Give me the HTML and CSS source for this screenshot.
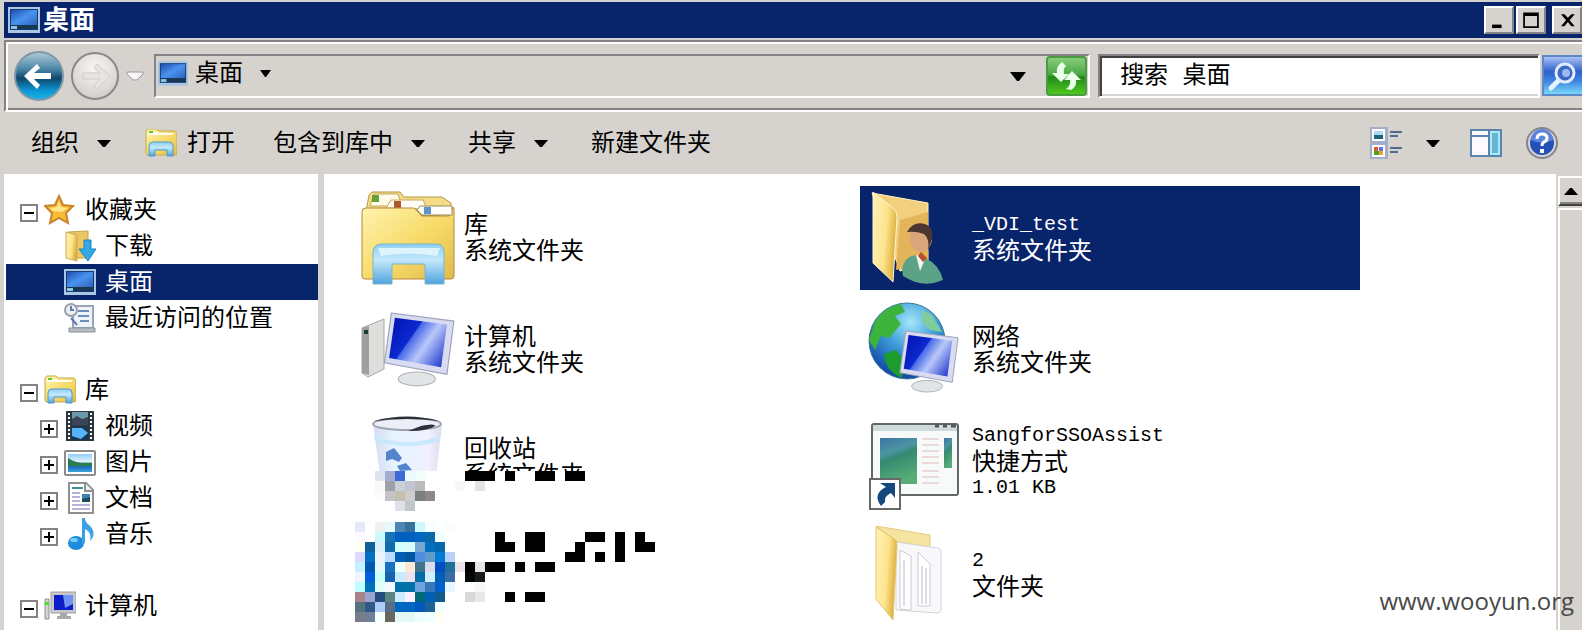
FILE: index.html
```html
<!DOCTYPE html>
<html lang="zh-CN">
  <head>
    <meta charset="UTF-8" />
    <meta name="viewport" content="width=device-width, initial-scale=1.0" />
    <title>桌面</title>
    <link rel="stylesheet" href="styles.css">
  </head>
  <body>
    <!-- shared icons -->
    <svg class="defs" width="0" height="0" aria-hidden="true">
      <defs>
        <linearGradient id="gScreen" x1="0" y1="0" x2="1" y2="1">
          <stop offset="0" stop-color="#1d4fae" /><stop offset="0.5" stop-color="#4a93f0" /><stop offset="1" stop-color="#2d62b8" />
        </linearGradient>
        <linearGradient id="gFolder" x1="0" y1="0" x2="1" y2="1">
          <stop offset="0" stop-color="#fff3ae" /><stop offset="0.55" stop-color="#f6da67" /><stop offset="1" stop-color="#e0ba4c" />
        </linearGradient>
        <linearGradient id="gFlap" x1="0" y1="0" x2="1" y2="0.3">
          <stop offset="0" stop-color="#fff0b8" /><stop offset="0.6" stop-color="#fde58d" /><stop offset="1" stop-color="#dfb040" />
        </linearGradient>
        <linearGradient id="gStand" x1="0" y1="0" x2="0" y2="1">
          <stop offset="0" stop-color="#8fd0f2" /><stop offset="0.4" stop-color="#c4e8fa" /><stop offset="1" stop-color="#4fa3dc" />
        </linearGradient>
        <linearGradient id="gMonitor" x1="0" y1="0.2" x2="1" y2="0.8">
          <stop offset="0" stop-color="#0515b4" /><stop offset="0.36" stop-color="#0b2ad0" /><stop offset="0.38" stop-color="#4869e8" /><stop offset="0.62" stop-color="#b9c8fa" /><stop offset="1" stop-color="#2740cf" />
        </linearGradient>
        <linearGradient id="gBack" x1="0" y1="0" x2="0" y2="1">
          <stop offset="0" stop-color="#b4ccd8" /><stop offset="0.35" stop-color="#4a88a8" /><stop offset="0.55" stop-color="#10486c" /><stop offset="0.8" stop-color="#0a96d4" /><stop offset="1" stop-color="#1cb4e4" />
        </linearGradient>
        <radialGradient id="gForward" cx="0.5" cy="0.35" r="0.7">
          <stop offset="0" stop-color="#fbf7f7" /><stop offset="1" stop-color="#cfcaca" />
        </radialGradient>
        <linearGradient id="gGreen" x1="0" y1="0" x2="0" y2="1">
          <stop offset="0" stop-color="#8ccf80" /><stop offset="0.48" stop-color="#46a640" /><stop offset="0.52" stop-color="#22881c" /><stop offset="1" stop-color="#52cc1c" />
        </linearGradient>
        <linearGradient id="gFind" x1="0" y1="0" x2="0" y2="1">
          <stop offset="0" stop-color="#b4c8f8" /><stop offset="0.4" stop-color="#2f60cc" /><stop offset="0.65" stop-color="#3f86e0" /><stop offset="1" stop-color="#7ce0fa" />
        </linearGradient>
        <radialGradient id="gGlobe" cx="0.55" cy="0.25" r="0.8">
          <stop offset="0" stop-color="#a4e6fa" /><stop offset="0.45" stop-color="#3c9cd8" /><stop offset="1" stop-color="#0a3c9c" />
        </radialGradient>
        <linearGradient id="gPicture" x1="0" y1="0" x2="0" y2="1">
          <stop offset="0" stop-color="#90ccf8" /><stop offset="0.45" stop-color="#e4f6fc" /><stop offset="0.5" stop-color="#2c8068" /><stop offset="0.65" stop-color="#3c9c74" /><stop offset="0.7" stop-color="#1c68bc" /><stop offset="1" stop-color="#3ca4e0" />
        </linearGradient>
        <linearGradient id="gApp" x1="0" y1="0" x2="0.3" y2="1">
          <stop offset="0" stop-color="#3f74a0" /><stop offset="0.35" stop-color="#4c94a4" /><stop offset="0.5" stop-color="#348a70" /><stop offset="1" stop-color="#58ac78" />
        </linearGradient>
        <linearGradient id="gBin" x1="0" y1="0" x2="1" y2="0">
          <stop offset="0" stop-color="#d4dcf0" /><stop offset="0.3" stop-color="#e4f4ff" /><stop offset="0.8" stop-color="#f2f0ff" /><stop offset="1" stop-color="#dcdcec" />
        </linearGradient>
      </defs>

      <symbol id="icon-desktop" viewBox="0 0 32 26">
        <rect width="32" height="26" fill="#a9c6e2" />
        <rect x="2" y="2" width="28" height="21" fill="#143a78" />
        <rect x="3" y="3" width="26" height="15" fill="url(#gScreen)" />
        <path d="M3 18h26v4H3z" fill="#173850" />
        <path d="M3 19h6v3H3z" fill="#8cc4e4" />
      </symbol>

      <symbol id="icon-library" viewBox="0 0 32 28">
        <path d="M1 5V2l2-2h9l2 2h16l2 2v21l-2 1H2l-1-2z" fill="url(#gFolder)" stroke="#c9a84a" />
        <path d="M3 3h9l2 1h14v2H3z" fill="#fffdf0" />
        <path d="M4 2h4v2H4z" fill="#5cc832" />
        <path d="M4 27V17q0-4 4-4h16q4 0 4 4v10h-6v-6H10v6z" fill="url(#gStand)" stroke="#4c9ccc" />
      </symbol>

      <symbol id="icon-monitor" viewBox="0 0 64 64">
        <path d="M24 51l19 4 1 5-10 3-13-3z" fill="#d8dadc" />
        <ellipse cx="31" cy="57" rx="16" ry="6" fill="#e2e4e6" stroke="#b0b4b8" />
        <path d="M9 0l54 7-6 46L3 43z" fill="#d9dcf0" stroke="#9ca0bc" />
        <path d="M12 4l45 6-5 37L7 39z" fill="url(#gMonitor)" />
      </symbol>
    </svg>

    <div class="window">
      <header class="titlebar">
        <svg class="title-icon"><use href="#icon-desktop" /></svg>
        <h1>桌面</h1>
        <div class="window-buttons">
          <button type="button" aria-label="最小化">
            <svg viewBox="0 0 30 26"><path d="M7 18h11v4H7z" /></svg>
          </button>
          <button type="button" aria-label="最大化">
            <svg viewBox="0 0 30 26"><path d="M6 4h18v18H6zM8 8v12h14V8z" fill-rule="evenodd" /></svg>
          </button>
          <button type="button" class="close" aria-label="关闭">
            <svg viewBox="0 0 30 26"><path d="M8 6h4l4 4 4-4h4l-6 7 6 7h-4l-4-5-4 5H8l6-7z" /></svg>
          </button>
        </div>
      </header>

      <div class="navbar">
        <div class="history">
          <button type="button" aria-label="后退">
            <svg width="50" height="50" viewBox="0 0 50 50">
              <circle cx="25" cy="25" r="24" fill="url(#gBack)" stroke="#7f98a8" stroke-width="2" />
              <path d="M10 25l13-12 3 4-6 5h17v6H20l6 6-3 4z" fill="#fff" />
            </svg>
          </button>
          <button type="button" aria-label="前进">
            <svg width="50" height="50" viewBox="0 0 50 50">
              <circle cx="25" cy="25" r="23" fill="url(#gForward)" stroke="#8c8888" stroke-width="2" />
              <path d="M40 25L27 13l-3 4 6 5H13v6h17l-6 6 3 4z" fill="#e9e4e4" stroke="#d2cccc" />
            </svg>
          </button>
          <button type="button" class="recent" aria-label="最近的页面">
            <svg width="18" height="10" viewBox="0 0 18 10"><path d="M1 1h16v2l-6 6H7L1 3z" fill="#f6f4f6" stroke="#9a9a9e" /></svg>
          </button>
        </div>

        <div class="address">
          <button type="button" class="crumb">
            <svg class="crumb-icon"><use href="#icon-desktop" /></svg>
            <span>桌面</span>
            <svg width="11" height="7" viewBox="0 0 11 7"><path d="M0 0h11L6 7H5z" /></svg>
          </button>
          <button type="button" class="history-arrow" aria-label="历史记录">
            <svg width="16" height="9" viewBox="0 0 16 9"><path d="M0 0h16L9 9H7z" /></svg>
          </button>
          <button type="button" class="refresh" aria-label="刷新">
            <svg width="42" height="40" viewBox="0 0 42 40">
              <rect x="1" y="1" width="39" height="38" rx="3" fill="url(#gGreen)" stroke="#4c9a44" stroke-width="2" />
              <path d="M16 6q-6 4-5 11H6l9 9 8-8h-5q-1-6 2-8zM26 15l9 9h-5q1 7-5 10l-5-1q5-3 4-9h-6z" fill="#eaffea" />
            </svg>
          </button>
        </div>

        <form class="search" onsubmit="return false">
          <input type="text" name="q" id="q" placeholder="搜索 桌面" aria-label="搜索 桌面" />
          <button type="submit" aria-label="搜索">
            <svg width="40" height="42" viewBox="0 0 40 42">
              <rect x="1" y="1" width="42" height="39" fill="url(#gFind)" stroke="#5c88c8" stroke-width="2" />
              <path d="M18 24L9 33" stroke="#e8f2ff" stroke-width="5" stroke-linecap="round" />
              <circle cx="23" cy="18" r="9" fill="#3c68c4" stroke="#e0ecff" stroke-width="3" />
              <circle cx="24" cy="18" r="4" fill="#9cb8f0" />
            </svg>
          </button>
        </form>
      </div>

      <nav class="toolbar">
        <button type="button" class="cmd drop">组织<svg class="arrow" viewBox="0 0 14 7"><path d="M0 0h14L8 7H6z" /></svg></button>
        <button type="button" class="cmd has-icon"><svg class="icon-sm"><use href="#icon-library" /></svg>打开</button>
        <button type="button" class="cmd drop">包含到库中<svg class="arrow" viewBox="0 0 14 7"><path d="M0 0h14L8 7H6z" /></svg></button>
        <button type="button" class="cmd drop">共享<svg class="arrow" viewBox="0 0 14 7"><path d="M0 0h14L8 7H6z" /></svg></button>
        <button type="button" class="cmd">新建文件夹</button>

        <div class="tools">
          <button type="button" aria-label="更改视图">
            <svg width="32" height="32" viewBox="0 0 32 32" shape-rendering="crispEdges">
              <path d="M0 0h18v32H0z" fill="#a2aeca" />
              <path d="M2 2h13v12H2zM2 18h13v12H2z" fill="#fff" />
              <path d="M4 4h9v4H4z" fill="#a8dcf4" /><path d="M4 8h9v4H4z" fill="#1c6474" />
              <path d="M4 20h4v4H4z" fill="#d85c2c" /><path d="M9 20h4v4H9z" fill="#6c6ce4" />
              <path d="M4 24h5v4H4z" fill="#4ca41c" /><path d="M9 24h4v4H9z" fill="#e8a430" />
              <path d="M20 4h12v2H20zM20 8h8v2h-8zM20 20h12v2H20zM20 24h8v2h-8z" fill="#506c8c" />
            </svg>
          </button>
          <button type="button" aria-label="更多选项"><svg class="arrow" viewBox="0 0 14 7"><path d="M0 0h14L8 7H6z" /></svg></button>
          <button type="button" class="pane" aria-label="显示预览窗格">
            <svg width="32" height="28" viewBox="0 0 32 28" shape-rendering="crispEdges">
              <path d="M0 0h32v28H0z" fill="#5c84ac" />
              <path d="M2 2h16v4H2zM2 8h16v18H2z" fill="#fdfbff" />
              <path d="M20 2h10v24H20z" fill="#a4ecfc" /><path d="M22 4h6v20h-6z" fill="#6cb4d4" />
            </svg>
          </button>
          <button type="button" aria-label="帮助">
            <svg width="32" height="32" viewBox="0 0 32 32">
              <circle cx="16" cy="16" r="15" fill="#d4d4dc" stroke="#84848c" stroke-width="2" />
              <circle cx="16" cy="16" r="12" fill="#2450b8" />
              <path d="M5 13a11 11 0 0 1 22 0q-11 5-22 0z" fill="#5c84dc" />
              <path d="M11 12q0-5 5-5t5 4q0 3-3 4-2 1-2 4" fill="none" stroke="#fff" stroke-width="3" />
              <path d="M14 22h4v4h-4z" fill="#fff" />
            </svg>
          </button>
        </div>
      </nav>

      <div class="content">
        <aside class="sidebar">
          <ul class="tree">
            <li>
              <div class="row">
                <button type="button" class="expander open" aria-label="折叠"></button>
                <a href="#">
                  <svg class="tree-icon" viewBox="0 0 32 32">
                    <path d="M15 2l4 9 10 1-7 7 2 10-9-5-9 5 2-10-7-7 10-1z" fill="#f8bc38" stroke="#c98430" stroke-width="2" />
                    <path d="M15 7l2 6 7 1-6 4-9-1-3-3 7-1z" fill="#ffe88c" />
                  </svg>收藏夹</a>
              </div>
              <ul>
                <li class="row leaf"><a href="#">
                  <svg class="tree-icon" viewBox="0 0 32 32">
                    <path d="M4 2l20-1v27H10z" fill="#ecc764" stroke="#c9a347" />
                    <path d="M2 2l11 3v26L2 28z" fill="url(#gFlap)" stroke="#d0ac50" />
                    <path d="M20 10h7v9h5L24 31l-9-12h5z" fill="#32a8e4" stroke="#1c84c0" />
                  </svg>下载</a></li>
                <li class="row leaf selected"><a href="#"><svg class="tree-icon"><use href="#icon-desktop" /></svg>桌面</a></li>
                <li class="row leaf"><a href="#">
                  <svg class="tree-icon" viewBox="0 0 32 32">
                    <path d="M9 4h20v22H9z" fill="#eef2fa" stroke="#9aa4b4" stroke-width="2" />
                    <path d="M5 26h26v4H5z" fill="#b8bcc4" stroke="#8c9098" />
                    <path d="M14 9h11M14 14h11M16 19h9" stroke="#6c8cbc" stroke-width="2" />
                    <circle cx="7" cy="8" r="6" fill="#eceef2" stroke="#9ca0a8" stroke-width="2" />
                    <path d="M7 4v4h3M7 16l6 7" fill="none" stroke="#5c7cac" stroke-width="2" />
                  </svg>最近访问的位置</a></li>
              </ul>
            </li>
            <li>
              <div class="row">
                <button type="button" class="expander open" aria-label="折叠"></button>
                <a href="#"><svg class="tree-icon"><use href="#icon-library" /></svg>库</a>
              </div>
              <ul>
                <li class="row child">
                  <button type="button" class="expander" aria-label="展开"></button>
                  <a href="#">
                    <svg class="tree-icon" viewBox="0 0 32 32">
                      <path d="M2 1h28v30H2z" fill="#2c3840" />
                      <path d="M8 2h16v13H8z" fill="#6c98ac" /><path d="M8 9l5-3 5 3 6-2v8H8z" fill="#3c4458" />
                      <path d="M8 17h16v13H8z" fill="#1c3454" /><path d="M8 18h10l6 5-7 6-9-3z" fill="#54b4f8" />
                      <path d="M5 3v27M27 3v27" stroke="#fff" stroke-width="2" stroke-dasharray="2 2" />
                    </svg>视频</a>
                </li>
                <li class="row child">
                  <button type="button" class="expander" aria-label="展开"></button>
                  <a href="#">
                    <svg class="tree-icon" viewBox="0 0 32 32">
                      <rect x="1" y="5" width="30" height="24" rx="1" fill="#fff" stroke="#8c8c8c" stroke-width="2" />
                      <path d="M4 8h24v18H4z" fill="url(#gPicture)" />
                      <path d="M4 12q10 7 24 5v3H4z" fill="#2c7c50" />
                    </svg>图片</a>
                </li>
                <li class="row child">
                  <button type="button" class="expander" aria-label="展开"></button>
                  <a href="#">
                    <svg class="tree-icon" viewBox="0 0 32 32">
                      <path d="M5 1h17l7 7v23H5z" fill="#fff" stroke="#909090" stroke-width="2" />
                      <path d="M21 1v8h8" fill="#eee" stroke="#909090" stroke-width="2" />
                      <path d="M8 6h11" stroke="#3c9498" stroke-width="2" />
                      <path d="M8 11h8M8 15h8M8 19h8M8 23h18M8 27h18" stroke="#b4b4d8" stroke-width="2" />
                      <path d="M18 12h8v8h-8z" fill="#3c84b8" /><path d="M18 17l8-2v5h-8z" fill="#1c4c5c" />
                    </svg>文档</a>
                </li>
                <li class="row child">
                  <button type="button" class="expander" aria-label="展开"></button>
                  <a href="#">
                    <svg class="tree-icon" viewBox="0 0 32 32">
                      <ellipse cx="12" cy="25" rx="8" ry="7" fill="#1c8cdc" />
                      <path d="M18 26V0h3q0 4 4 7 6 5 4 12l-3 4q2-9-5-12v14z" fill="#3ca0e4" />
                      <ellipse cx="10" cy="22" rx="4" ry="2" fill="#7cccf8" />
                    </svg>音乐</a>
                </li>
              </ul>
            </li>
            <li>
              <div class="row">
                <button type="button" class="expander open" aria-label="折叠"></button>
                <a href="#">
                  <svg class="tree-icon" viewBox="0 0 32 32">
                    <path d="M1 9h4v20H1z" fill="#d4d4d4" stroke="#909090" /><path d="M1 12h4v3H1z" fill="#4ce41c" />
                    <path d="M7 2h25v21H7z" fill="#c8c8cc" stroke="#a0a0a4" />
                    <path d="M10 5h19v15H10z" fill="#0c1cc8" /><path d="M19 5h10v9l-8 4z" fill="#6c94f0" />
                    <path d="M16 23h7v3h4v3H13v-3h3z" fill="#a8a8ac" />
                  </svg>计算机</a>
              </div>
            </li>
          </ul>
        </aside>

        <main class="files">
          <div class="tile">
            <svg class="tile-icon" viewBox="0 0 96 96">
              <path d="M6 22L9 5l3-3h28l4 5h38l9 6v14z" fill="#f3dc84" stroke="#b99848" />
              <path d="M10 16l4-12h24l4 12z" fill="#fffbe8" stroke="#c0a860" />
              <path d="M12 5h7v7h-7z" fill="#68a03c" />
              <path d="M26 18l5-8h32l4 9z" fill="#fffdf4" stroke="#c8a868" /><path d="M34 11h7v7h-7z" fill="#b0582c" />
              <path d="M2 86V22q0-4 4-4h48l8 8h27q5-14 5-6v66q0 3-3 3H5q-3 0-3-3z" fill="url(#gFolder)" stroke="#b9863a" />
              <path d="M60 16h32v9H62l-5-5z" fill="#fffef8" stroke="#9a8a58" /><path d="M64 17h7v7h-7z" fill="#5a94c8" />
              <path d="M13 94V63q0-9 9-9h54q8 0 8 9v31H65V74H32v20z" fill="url(#gStand)" stroke="#78b4cc" />
              <path d="M18 58h62l-3 8q-28-5-56 0z" fill="#def4fc" />
            </svg>
            <div class="info"><p>库</p><p>系统文件夹</p></div>
          </div>

          <div class="tile selected">
            <svg class="tile-icon" viewBox="0 0 96 96">
              <path d="M4 3l56 10v60l-28 8z" fill="#f2cf7c" stroke="#fff3c0" />
              <path d="M32 30l28-8v50l-32 8z" fill="#e3b45a" />
              <path d="M5 2l20 16q4 3 4 9l-4 65L5 73z" fill="url(#gFlap)" stroke="#fff6d0" />
              <path d="M34 80q2-14 15-15l8 3q14 6 18 22-20 9-40-4z" fill="#5ba286" />
              <path d="M48 65l4 16 6-14z" fill="#f4f4ee" /><path d="M53 62l6 6-4 4-5-6z" fill="#b85030" />
              <ellipse cx="53" cy="48" rx="11" ry="14" fill="#d9a67c" />
              <path d="M39 42q6-11 18-8 9 3 7 15l-4 12q2-12-4-17-8-3-17-2z" fill="#4a3630" />
            </svg>
            <div class="info"><p class="latin">_VDI_test</p><p>系统文件夹</p></div>
          </div>

          <div class="tile">
            <svg class="tile-icon" viewBox="0 0 96 96">
              <path d="M2 26l22-9v50L8 75l-6-4z" fill="#dededc" stroke="#a8a8a8" />
              <path d="M2 26l7-2v49l-7-2z" fill="#9ea09e" /><path d="M4 28h4v4H4z" fill="#184028" />
              <use href="#icon-monitor" x="21" y="7" width="74" height="82" preserveAspectRatio="none" />
            </svg>
            <div class="info"><p>计算机</p><p>系统文件夹</p></div>
          </div>

          <div class="tile">
            <svg class="tile-icon" viewBox="0 0 96 96">
              <circle cx="39" cy="39" r="38" fill="url(#gGlobe)" stroke="#3c7894" />
              <path d="M7 20q9-15 26-18l4 8-10 4 6 8-12 14-8-2-6 14-6-10z" fill="#3cb43c" />
              <path d="M16 52l12-4 8 10-2 18q-16-6-18-24z" fill="#1c9c2c" />
              <path d="M54 8l10 5 10 17-12-2-8-8z" fill="#80cc9c" />
              <use href="#icon-monitor" x="29" y="26" width="62" height="68" preserveAspectRatio="none" />
            </svg>
            <div class="info"><p>网络</p><p>系统文件夹</p></div>
          </div>

          <div class="tile">
            <svg class="tile-icon" viewBox="0 0 96 96">
              <path d="M13 10h69l-9 80H24z" fill="url(#gBin)" />
              <path d="M14 22q34 12 66 0v5q-32 10-65 0z" fill="#c8e8fc" />
              <ellipse cx="47" cy="10" rx="34" ry="6" fill="#eceef8" stroke="#a0a4b0" stroke-width="2" />
              <path d="M14 7q33-9 65 0-32-4-65 0zM48 17q20 0 27-5 0-3-14 0z" fill="#2c3038" />
              <path d="M26 38l8-4 8 10-3 4-7-3-6 2zM37 52l9-3 6 7-12 1z" fill="#5484cc" />
            </svg>
            <div class="info"><p>回收站</p><p>系统文件夹</p></div>
            <svg class="blocks cover" data-blocks="bin" viewBox="0 0 30 4"></svg>
          </div>

          <div class="tile">
            <svg class="tile-icon" viewBox="0 0 96 96">
              <rect x="4" y="10" width="86" height="71" rx="2" fill="#f8fafa" stroke="#60686c" stroke-width="2" />
              <path d="M5 11h84v6H5z" fill="#cddad8" />
              <path d="M67 12h4M75 12h4M83 12h5" stroke="#505858" stroke-width="3" />
              <path d="M12 24h37v46H12z" fill="url(#gApp)" />
              <path d="M54 25h17M54 31h17M54 37h17M54 43h17M54 49h17M54 57h17M54 63h17M54 69h17" stroke="#e0b8b8" />
              <path d="M76 24h8v30h-8z" fill="url(#gApp)" />
              <path d="M2 65h30v30H2z" fill="#fff" stroke="#686868" stroke-width="2" />
              <path d="M12 69h15v15l-4-5q-7 3-6 9l-4 4q-9-12 5-19z" fill="#17487c" />
            </svg>
            <div class="info"><p class="latin">SangforSSOAssist</p><p>快捷方式</p><p class="latin">1.01 KB</p></div>
          </div>

          <div class="tile masked">
            <svg class="blocks" data-blocks="hidden" viewBox="0 0 30 10"></svg>
          </div>

          <div class="tile">
            <svg class="tile-icon" viewBox="0 0 96 96">
              <path d="M8 0l54 9v12L30 16z" fill="#f4e4a0" stroke="#e4cc80" />
              <path d="M28 16l42 6q3 1 3 4v58q0 3-4 3l-41-3z" fill="#f8f8fa" stroke="#d4d4dc" />
              <path d="M32 24l11 6v54l-11-1zM50 26l12 12v42H50z" fill="#fff" stroke="#ccccd2" />
              <path d="M36 34v46M54 40v38M58 42v36" stroke="#dcdce4" stroke-width="2" />
              <path d="M8 1l20 13q1 2 1 6l-4 74L8 73z" fill="url(#gFlap)" stroke="#e4c870" />
            </svg>
            <div class="info"><p class="latin">2</p><p>文件夹</p></div>
          </div>
        </main>

        <div class="scrollbar">
          <button type="button" aria-label="向上滚动">
            <svg width="14" height="7" viewBox="0 0 14 7"><path d="M6 0h2l6 7H0z" /></svg>
          </button>
          <div class="thumb"></div>
        </div>
      </div>

      <p class="watermark">www.wooyun.org</p>
    </div>

    <script>
      // each entry: row, first column, then one colour per cell
      const blocks = {
        bin: [
          [0, 2, "#dce4f0 #a4acd0 #3c68d8 #eff8ff #effff8"],
          [0, 11, "#000 #000 #000"],
          [0, 15, "#000"],
          [0, 18, "#000 #000"],
          [0, 21, "#000 #000"],
          [1, 2, "#f8f8f8 #9ca0a8 #c8d0d8 #c4c4d0 #bcbcbc"],
          [1, 10, "#f8f8f8 #fff #e8e0e8"],
          [2, 2, "#fffaff #c4c4c8 #c4c0b0 #cccccc #788080 #8c888c"],
          [3, 4, "#e0e0e8 #c0c8cc"],
        ],
        hidden: [
          [0, 0, "#e5eaf8 #fff #eef2ee #e5fbfb #4f84b3 #376f9d #ccf8fe #f6ffff #fff #f7fff7"],
          [1, 0, "#fffaff #fff #ccf8ff #1873b7 #0060c0 #0060c0 #0068c0 #0868a8 #eeffff"],
          [2, 0, "#fffff4 #10609c #dceffc #106cac #d4ffff #d8fcfc #78a8d0 #0070c0 #0868a8"],
          [3, 0, "#dcd8ff #0070c4 #eef4ff #bcdcff #0060b8 #0058a0 #508ce0 #609cc8 #007cd8 #bcd0f8"],
          [4, 0, "#c4f0ff #0058b0 #e4f8ff #1870c0 #eeffff #ffe8d4 #40748c #dcdcec #0050c4 #207098 #ece4ec"],
          [5, 0, "#f0f4ff #0060dc #ccfff8 #1860b0 #c8ecff #ece0ec #006ca8 #d0f0ff #0060b8 #3c6ca0"],
          [6, 0, "#c0ffff #0070b8 #e0fff8 #f4f8ff #0070a8 #0070a8 #70a4e0 #3878b8 #0060cc #e4f8ff"],
          [7, 0, "#a88488 #9ca4d0 #244c80 #5c8480 #ccecff #fff0ff #006878 #0060b8 #105c8c"],
          [8, 0, "#54747c #305888 #acccf8 #586c88 #0068c0 #0068c0 #0058bc #206094 #f0ffff"],
          [9, 0, "#787c88 #708098 #f4ffff #686860 #e4f8f8 #e4f8f8 #f0fcff #efffff #fffff4"],
          [1, 14, "#000"],
          [1, 17, "#000 #000"],
          [1, 23, "#000 #000"],
          [1, 26, "#000"],
          [1, 28, "#000"],
          [2, 14, "#000 #000"],
          [2, 17, "#000 #000"],
          [2, 22, "#000"],
          [2, 26, "#000"],
          [2, 28, "#000 #000"],
          [3, 21, "#000 #000"],
          [3, 24, "#000"],
          [3, 26, "#000"],
          [4, 11, "#000 #e4e4e4 #000 #000"],
          [4, 16, "#000"],
          [4, 18, "#000 #000"],
          [5, 11, "#040804 #181c18"],
          [6, 12, "#f8f8f8"],
          [7, 11, "#d8d8d8 #e8e8e8"],
          [7, 15, "#000"],
          [7, 17, "#000 #000"],
        ],
      };

      document.querySelectorAll("[data-blocks]").forEach((svg) => {
        blocks[svg.dataset.blocks].forEach(([row, col, colors]) => {
          colors.split(" ").forEach((color, i) => {
            const rect = document.createElementNS("http://www.w3.org/2000/svg", "rect");
            rect.setAttribute("x", col + i);
            rect.setAttribute("y", row);
            rect.setAttribute("width", 1);
            rect.setAttribute("height", 1);
            rect.setAttribute("fill", color);
            svg.appendChild(rect);
          });
        });
      });
    </script>
  </body>
</html>
```

FILE: styles.css
```css
* {
  box-sizing: border-box;
}

body {
  margin: 0;
  font-family: "Liberation Sans", "Noto Sans CJK SC", sans-serif;
  font-size: 24px;
  line-height: 26px;
  color: #000;
  background-color: #d6d3ce;
}

h1,
p,
ul {
  margin: 0;
  padding: 0;
}

ul {
  list-style: none;
}

a {
  color: inherit;
  text-decoration: none;
}

button {
  display: flex;
  align-items: center;
  padding: 0;
  border: none;
  background: none;
  font: inherit;
  color: inherit;
  flex-shrink: 0;
}

svg {
  display: block;
  flex-shrink: 0;
}

.defs {
  position: absolute;
}

.window {
  position: relative;
  display: flex;
  flex-direction: column;
  height: 100vh;
  padding: 2px 0 0 4px;
  overflow: hidden;
}

/* title bar */
.titlebar {
  display: flex;
  align-items: center;
  height: 36px;
  flex-shrink: 0;
  padding-left: 4px;
  background-color: #08246b;
  color: #fff;
}

.title-icon {
  width: 32px;
  height: 26px;
}

.titlebar h1 {
  margin-left: 3px;
  font-size: 26px;
  font-weight: bold;
}

.window-buttons {
  display: flex;
  gap: 2px;
  margin-left: auto;
}

.window-buttons button {
  width: 30px;
  height: 28px;
  background-color: #d6d3ce;
  border: 2px solid #fff;
  border-right-color: #848284;
  border-bottom-color: #848284;
}

.window-buttons .close {
  margin-left: 4px;
}

/* address bar */
.navbar {
  display: flex;
  align-items: center;
  height: 72px;
  flex-shrink: 0;
  margin-top: 2px;
  padding-left: 6px;
  border-top: 2px solid #848284;
  border-left: 2px solid #848284;
  border-bottom: 2px solid #fff;
  box-shadow: inset 2px 2px #fff, inset 0 -2px #848284;
}

.history {
  display: flex;
  align-items: center;
  gap: 6px;
  margin: 0 10px 0 2px;
}

.address {
  display: flex;
  align-items: center;
  flex: 21 1 0;
  height: 44px;
  margin-right: 8px;
  border: 2px solid #fff;
  border-top-color: #848284;
  border-left-color: #848284;
}

.crumb {
  padding: 0 0 6px 2px;
}

.crumb span {
  margin: 0 17px 0 7px;
}

.crumb-icon {
  width: 30px;
  height: 25px;
}

.history-arrow {
  margin: 0 20px 0 auto;
}

.search {
  display: flex;
  align-items: center;
  flex: 10 1 40px;
}

.search input {
  flex: 1;
  width: 0;
  height: 44px;
  margin-right: 2px;
  padding: 0 20px;
  border: 2px solid #fff;
  border-top-color: #848284;
  border-left-color: #848284;
  border-radius: 0;
  outline: none;
  background-color: #fff;
  box-shadow: inset 2px 2px #424142, inset 0 -2px #d6d3ce;
  font-family: "Liberation Mono", "Noto Sans CJK SC", monospace;
  font-size: 24px;
  color: #000;
}

.search input::placeholder {
  color: #000;
  opacity: 1;
}

/* toolbar */
.toolbar {
  display: flex;
  align-items: center;
  height: 62px;
  flex-shrink: 0;
  padding: 0 24px 0 8px;
}

.cmd {
  padding: 0 19px;
  white-space: nowrap;
}

.cmd.drop {
  gap: 18px;
  padding-right: 24px;
}

.cmd.has-icon {
  gap: 10px;
  padding-left: 10px;
}

.arrow {
  width: 14px;
  height: 7px;
}

.icon-sm {
  width: 32px;
  height: 28px;
}

.tools {
  display: flex;
  align-items: center;
  gap: 24px;
  margin-left: auto;
}

.tools .pane {
  margin-left: 6px;
}

/* panes */
.content {
  display: flex;
  flex: 1;
  min-height: 0;
}

.sidebar {
  width: 314px;
  flex-shrink: 0;
  padding: 18px 0 0 2px;
  background-color: #fff;
  overflow: hidden;
}

.tree > li + li {
  margin-top: 36px;
}

.row {
  display: flex;
  align-items: center;
  gap: 6px;
  height: 36px;
  padding-left: 14px;
}

.row.child {
  padding-left: 34px;
}

.row.leaf {
  padding-left: 58px;
}

.row a {
  display: flex;
  align-items: center;
  gap: 9px;
  white-space: nowrap;
}

.tree-icon {
  width: 32px;
  height: 32px;
}

.selected {
  background-color: #08246b;
  color: #fff;
}

.expander {
  width: 18px;
  height: 18px;
  margin-top: 6px;
  border: 2px solid #848284;
  background: linear-gradient(#000, #000) center / 10px 2px no-repeat,
    linear-gradient(#000, #000) center / 2px 10px no-repeat;
}

.expander.open {
  background: linear-gradient(#000, #000) center / 10px 2px no-repeat;
}

.files {
  display: grid;
  grid-template-columns: repeat(auto-fill, 500px);
  grid-auto-rows: 104px;
  align-content: start;
  gap: 8px;
  flex: 1;
  margin-left: 6px;
  padding: 12px 0 0 28px;
  background-color: #fff;
  overflow: hidden;
}

.tile {
  position: relative;
  display: flex;
  align-items: center;
  gap: 8px;
  padding-left: 8px;
}

.tile-icon {
  width: 96px;
  height: 96px;
}

.latin {
  font-family: "Liberation Mono", monospace;
  font-size: 20px;
}

.tile.masked {
  align-items: flex-start;
  padding-left: 3px;
}

.blocks {
  width: 300px;
  shape-rendering: crispEdges;
}

.cover {
  position: absolute;
  left: 3px;
  top: 61px;
  height: 40px;
  background-color: #fff;
}

/* scrollbar */
.scrollbar {
  display: flex;
  flex-direction: column;
  width: 26px;
  flex-shrink: 0;
  border-left: 2px solid #d6d3ce;
}

.scrollbar button {
  justify-content: center;
  height: 30px;
  margin-top: 2px;
  border-top: 2px solid #fff;
  border-left: 2px solid #fff;
  border-bottom: 2px solid #424142;
  box-shadow: inset 0 -2px #848284;
}

.thumb {
  flex: 1;
  margin-top: 2px;
  border-top: 2px solid #fff;
  border-left: 2px solid #fff;
}

.watermark {
  position: absolute;
  right: 8px;
  bottom: 16px;
  font-family: "Open Sans", "Noto Sans", sans-serif;
  color: #484848;
}
```
